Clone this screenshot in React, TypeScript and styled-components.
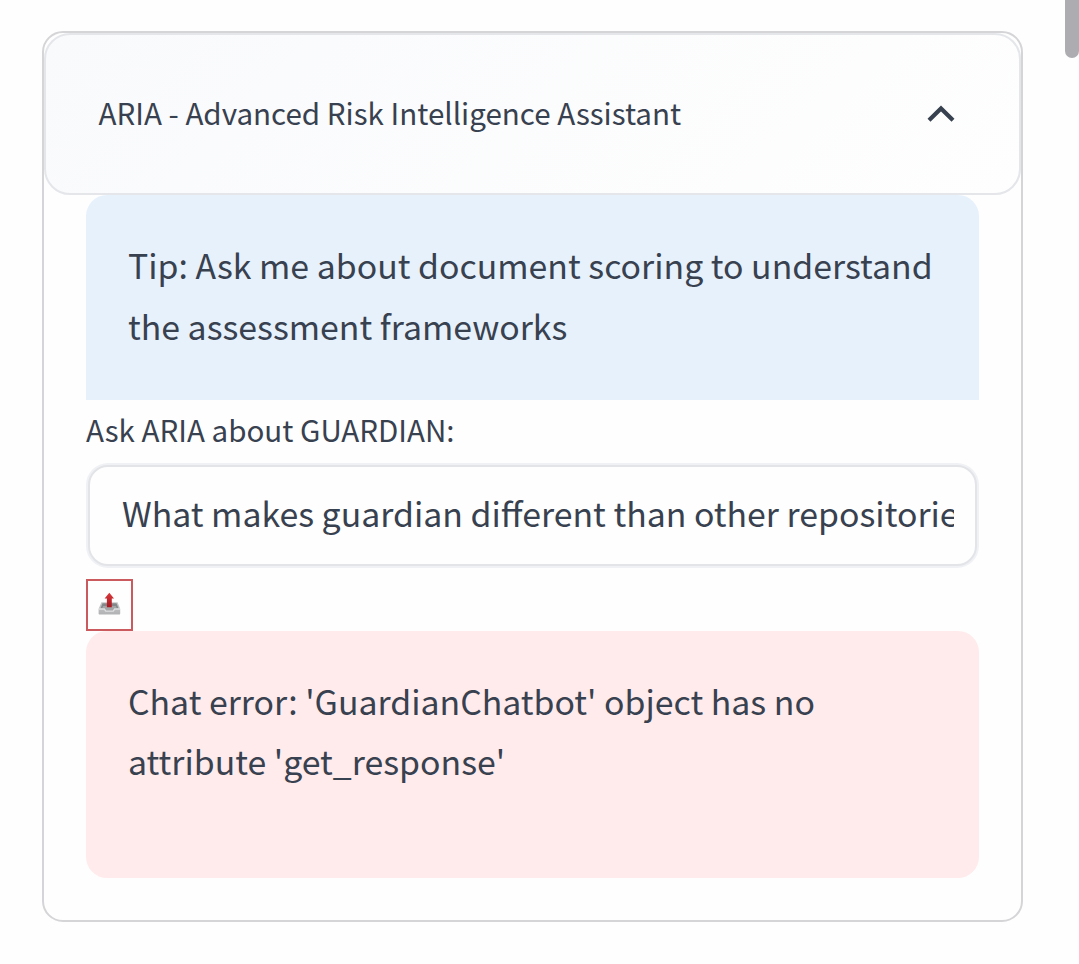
import React from "react";
import styled, { createGlobalStyle } from "styled-components";

const GlobalStyle = createGlobalStyle`
  *, *::before, *::after { box-sizing: border-box; }
  body {
    margin: 0;
    background: #fefefe;
    color: #38414f;
    font-family: "Noto Sans CJK SC", "Noto Sans", sans-serif;
    overflow: hidden;
  }
`;

const Page = styled.main`
  height: 964px;
  padding: 31px 56px 0 42px;
`;

const ScrollThumb = styled.div`
  position: absolute;
  top: 0;
  right: 0;
  width: 14px;
  height: 58px;
  border-radius: 0 0 7px 7px;
  background: #adacb1;
`;

const Expander = styled.section`
  height: 891px;
  border: 2px solid #d5d5d8;
  border-radius: 21px;
`;

const Summary = styled.header`
  display: flex;
  align-items: center;
  justify-content: space-between;
  height: 162px;
  padding: 0 64.5px 0 52.5px;
  border: 2px solid #e4e6ea;
  border-radius: 26px;
  background: linear-gradient(135deg, #f9fafc 0%, #fefefe 100%);
`;

const Title = styled.h1`
  margin: 0;
  padding-bottom: 2px;
  font-size: 29.57px;
  line-height: 48px;
  font-weight: 400;
  white-space: nowrap;
`;

const Content = styled.div`
  display: flex;
  flex-direction: column;
  align-items: flex-start;
  padding: 0 42px;
`;

const Alert = styled.div<{ $tone: "info" | "error" }>`
  width: 100%;
  height: ${(p) => (p.$tone === "info" ? 205 : 247)}px;
  padding: 40px 42px 0;
  border-radius: ${(p) => (p.$tone === "info" ? "21px 21px 0 0" : "21px")};
  background: ${(p) => (p.$tone === "info" ? "#e7f1fc" : "#ffebeb")};
  font-size: 33.84px;
  line-height: ${(p) => (p.$tone === "info" ? 60.5 : 60)}px;
  white-space: nowrap;
`;

const Label = styled.label`
  height: 63px;
  font-size: 29.57px;
  line-height: 60px;
  white-space: nowrap;
`;

const Field = styled.div`
  width: 100%;
  height: 105px;
  padding: 2px;
  border-radius: 22px;
  background: #f0f1f5;
`;

const Input = styled.input`
  display: block;
  width: 100%;
  height: 101px;
  padding: 0 21px 7px 32px;
  border: 2px solid #e2e4e8;
  border-radius: 20px;
  outline: none;
  background: #fefefe;
  color: inherit;
  font-family: inherit;
  font-size: 33.84px;
`;

const SendButton = styled.button`
  display: flex;
  align-items: center;
  justify-content: center;
  width: 47px;
  height: 52px;
  margin-top: 11px;
  padding: 0 0 2px;
  border: 2px solid #cb5a5e;
  background: #fefefe;
`;

const Chevron = () => (
  <svg width="28" height="18" viewBox="0 0 28 18" fill="none">
    <path d="M2 15.2 14 3.4 26 15.2" stroke="#38414f" strokeWidth="4.2" />
  </svg>
);

const OutboxIcon = () => (
  <svg width="23" height="24" viewBox="0 0 23 24">
    <defs>
      <linearGradient id="tray" x1="0" y1="0" x2="0" y2="1">
        <stop offset="0" stopColor="#c6c8c9" />
        <stop offset="1" stopColor="#b0b2b3" />
      </linearGradient>
      <linearGradient id="arrow" x1="0" y1="0" x2="0" y2="1">
        <stop offset="0" stopColor="#d9393b" />
        <stop offset="1" stopColor="#a81820" />
      </linearGradient>
    </defs>
    <path d="M3.4 10.2h16.2l2.6 6.8v4.6c0 .6-.4 1-1 1H1.6c-.6 0-1-.4-1-1V17z" fill="url(#tray)" />
    <path d="M4.5 11.3h14l2 5.3h-4.2l-1.4 2H8.1l-1.4-2H2.5z" fill="#85888a" />
    <path d="M5.2 14h12.6l1.2 2.6h-3l-1.4 1.8H8.4L7 16.6H4z" fill="#a3a5a6" />
    <path d="M.9 17h5.5l1.4 2.1h7.4l1.4-2.1h5.5" fill="none" stroke="#dedfe0" strokeWidth="1.4" />
    <path d="M11.3.8 16 6.5h-2.2v8.7H8.9V6.5H6.6z" fill="url(#arrow)" />
  </svg>
);

export default function App() {
  return (
    <>
      <GlobalStyle />
      <Page>
        <Expander>
          <Summary>
            <Title>ARIA - Advanced Risk Intelligence Assistant</Title>
            <Chevron />
          </Summary>
          <Content>
            <Alert $tone="info">
              Tip: Ask me about document scoring to understand
              <br />
              the assessment frameworks
            </Alert>
            <Label htmlFor="question">Ask ARIA about GUARDIAN:</Label>
            <Field>
              <Input
                id="question"
                readOnly
                value="What makes guardian different than other repositories?"
              />
            </Field>
            <SendButton aria-label="Send">
              <OutboxIcon />
            </SendButton>
            <Alert $tone="error">
              Chat error: 'GuardianChatbot' object has no
              <br />
              attribute 'get_response'
            </Alert>
          </Content>
        </Expander>
      </Page>
      <ScrollThumb />
    </>
  );
}
